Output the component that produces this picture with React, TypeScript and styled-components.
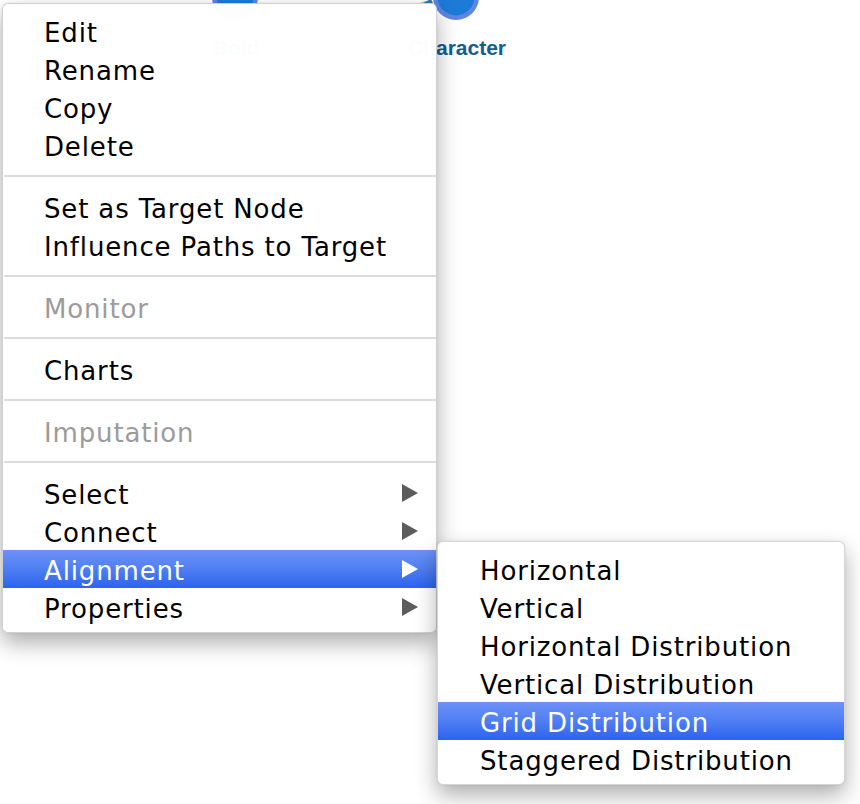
import styled, { createGlobalStyle } from 'styled-components';

const GlobalStyle = createGlobalStyle`
	html,
	body {
		margin: 0;
		padding: 0;
		background: #ffffff;
	}
`;

type Entry =
	| { kind: 'item'; label: string; disabled?: boolean; submenu?: boolean; active?: boolean }
	| { kind: 'sep' };

const mainEntries: Entry[] = [
	{ kind: 'item', label: 'Edit' },
	{ kind: 'item', label: 'Rename' },
	{ kind: 'item', label: 'Copy' },
	{ kind: 'item', label: 'Delete' },
	{ kind: 'sep' },
	{ kind: 'item', label: 'Set as Target Node' },
	{ kind: 'item', label: 'Influence Paths to Target' },
	{ kind: 'sep' },
	{ kind: 'item', label: 'Monitor', disabled: true },
	{ kind: 'sep' },
	{ kind: 'item', label: 'Charts' },
	{ kind: 'sep' },
	{ kind: 'item', label: 'Imputation', disabled: true },
	{ kind: 'sep' },
	{ kind: 'item', label: 'Select', submenu: true },
	{ kind: 'item', label: 'Connect', submenu: true },
	{ kind: 'item', label: 'Alignment', submenu: true, active: true },
	{ kind: 'item', label: 'Properties', submenu: true },
];

const alignmentItems = [
	'Horizontal',
	'Vertical',
	'Horizontal Distribution',
	'Vertical Distribution',
	'Grid Distribution',
	'Staggered Distribution',
];

const Arrow = ({ light }: { light?: boolean }) => (
	<ArrowIcon width="16" height="18" viewBox="0 0 16 18">
		<polygon points="0,0 16,9 0,18" fill={light ? '#ffffff' : '#5c5c5c'} />
	</ArrowIcon>
);

const Node = ({ cx, label }: { cx: number; label: string }) => (
	<g>
		<circle cx={cx} cy={-3} r={23} fill="#5f86e2" />
		<circle cx={cx} cy={-3} r={18.5} fill="#1c7bd7" />
		<text
			x={cx + 1}
			y={55}
			textAnchor="middle"
			fontFamily="'Liberation Sans', Arial, sans-serif"
			fontWeight="700"
			fontSize="21"
			fill="#135d8f"
		>
			{label}
		</text>
	</g>
);

const App = () => {
	return (
		<>
			<GlobalStyle />
			<Canvas>
				<Diagram width="860" height="80" viewBox="0 0 860 80">
					<Node cx={235} label="Bold" />
					<polygon points="402,13 431,-1 433,3" fill="#2b7ba6" />
					<line x1="396" y1="14" x2="426" y2="1" stroke="#9cc6dc" strokeWidth="1" />
					<Node cx={456} label="Character" />
				</Diagram>

				<MainMenu>
					{mainEntries.map((entry, i) =>
						entry.kind === 'sep' ? (
							<Separator key={i} />
						) : (
							<MenuItem key={i} $active={entry.active} $disabled={entry.disabled}>
								<Label>{entry.label}</Label>
								{entry.submenu && <Arrow light={entry.active} />}
								{entry.active && (
									<SubMenu>
										{alignmentItems.map((label) => (
											<MenuItem key={label} $active={label === 'Grid Distribution'} $sub>
												<Label>{label}</Label>
											</MenuItem>
										))}
									</SubMenu>
								)}
							</MenuItem>
						)
					)}
				</MainMenu>
			</Canvas>
		</>
	);
};

export default App;

const Canvas = styled.div`
	position: relative;
	width: 860px;
	height: 804px;
	overflow: hidden;
	background: #ffffff;
	font-family: 'DejaVu Sans', 'Lucida Grande', Verdana, sans-serif;
`;

const Diagram = styled.svg`
	display: block;
	position: absolute;
	left: 0;
	top: 0;
`;

const MainMenu = styled.div`
	position: absolute;
	left: 2px;
	top: 3px;
	width: 433px;
	padding: 8px 0 6px;
	background: rgba(255, 255, 255, 0.985);
	border: 1px solid rgba(0, 0, 0, 0.18);
	border-radius: 6px;
	box-shadow: 0 10px 22px rgba(0, 0, 0, 0.32), 0 0 3px rgba(0, 0, 0, 0.08);
`;

const SubMenu = styled.div`
	position: absolute;
	left: calc(100% + 1px);
	top: -9px;
	width: 406px;
	padding: 8px 0 6px;
	background: #ffffff;
	border: 1px solid rgba(0, 0, 0, 0.16);
	border-radius: 6px;
	box-shadow: 0 10px 22px rgba(0, 0, 0, 0.32), 0 0 3px rgba(0, 0, 0, 0.08);
	z-index: 2;
`;

const MenuItem = styled.div<{ $active?: boolean; $disabled?: boolean; $sub?: boolean }>`
	position: relative;
	display: flex;
	align-items: center;
	height: 38px;
	padding: 0 18px 0 ${(p) => (p.$sub ? '42px' : '41px')};
	font-size: 26px;
	letter-spacing: 0.85px;
	color: ${(p) => (p.$active ? '#ffffff' : p.$disabled ? '#9b9b9b' : '#000000')};
	background: ${(p) =>
		p.$active ? 'linear-gradient(to bottom, #6d92f6 0%, #4f7ef3 50%, #2c63ee 100%)' : 'transparent'};
`;

const Label = styled.span`
	flex: 1;
	white-space: nowrap;
	line-height: 38px;
	padding-top: 3px;
`;

const ArrowIcon = styled.svg`
	display: block;
	flex: none;
`;

const Separator = styled.div`
	height: 2px;
	margin: 11px 0 11px 1px;
	background: #dcdcdc;
`;
